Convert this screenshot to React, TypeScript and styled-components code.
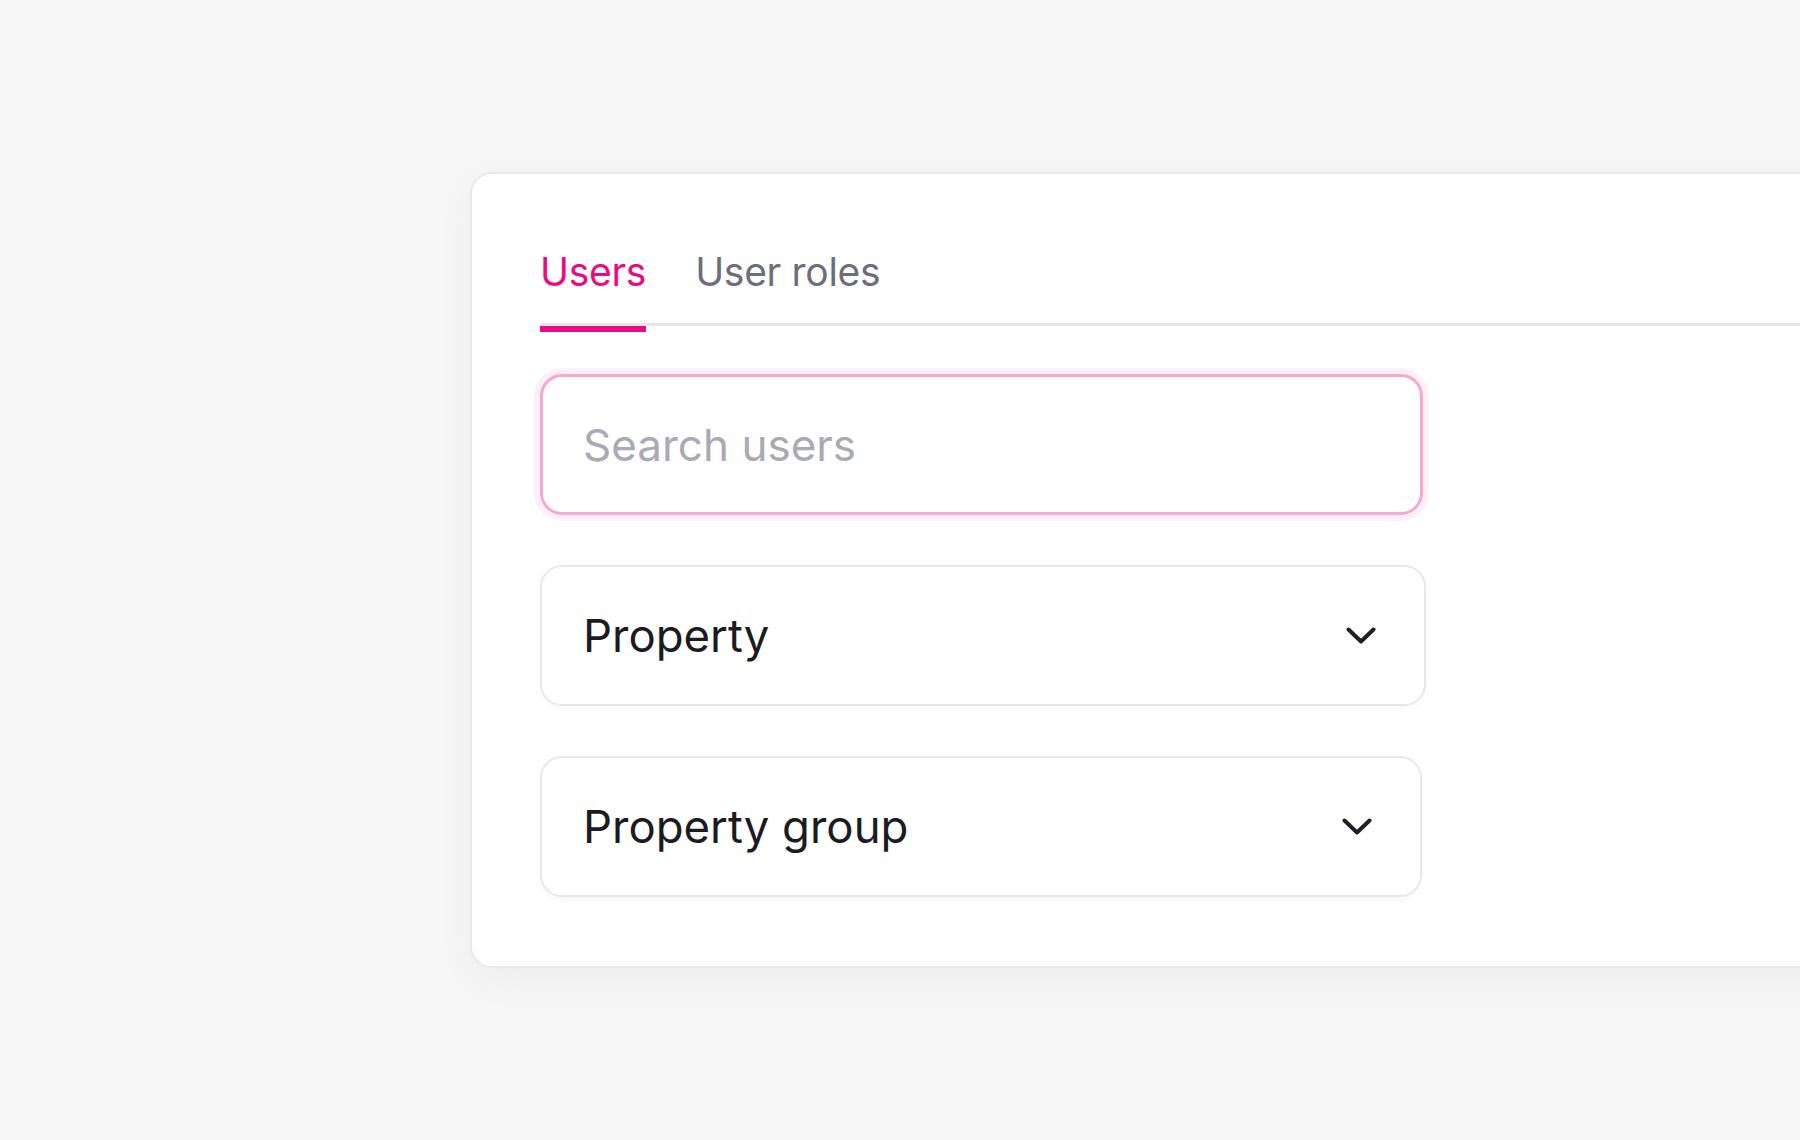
import { useState } from "react";
import styled, { createGlobalStyle } from "styled-components";

const GlobalStyle = createGlobalStyle`
  html, body {
    margin: 0;
    padding: 0;
    background: #f6f6f6;
    overflow: hidden;
  }
  body {
    font-family: Inter, "Noto Sans", "Liberation Sans", sans-serif;
    -webkit-font-smoothing: antialiased;
  }
`;

const Page = styled.div`
  width: 1800px;
  height: 1140px;
  padding: 172px 0 0 470px;
  box-sizing: border-box;
  display: flex;
  align-items: flex-start;
`;

const Card = styled.div`
  flex-shrink: 0;
  width: 1500px;
  box-sizing: border-box;
  background: #ffffff;
  border: 2px solid #e9e9e9;
  border-radius: 22px;
  box-shadow: 0 12px 40px rgba(0, 0, 0, 0.04);
  padding: 77px 68px 69px;
`;

const TabList = styled.div`
  display: flex;
  gap: 49px;
  border-bottom: 3px solid #e8e8eb;
  margin-bottom: 48px;
`;

const Tab = styled.button<{ $active?: boolean }>`
  position: relative;
  background: none;
  border: none;
  padding: 0 0 30px;
  margin: 0;
  font-family: inherit;
  font-size: 39px;
  line-height: 42px;
  letter-spacing: -0.3px;
  font-weight: 400;
  color: ${(p) => (p.$active ? "#ea0a84" : "#6c6e7a")};
  cursor: pointer;

  &::after {
    content: "";
    display: ${(p) => (p.$active ? "block" : "none")};
    position: absolute;
    left: 0;
    right: 0;
    bottom: -9px;
    height: 6px;
    background: #ea0a84;
  }
`;

const Fields = styled.div`
  display: flex;
  flex-direction: column;
  gap: 50px;
  width: 886px;
`;

const SearchInput = styled.input`
  width: 883px;
  height: 141px;
  box-sizing: border-box;
  border: 3px solid #f7a8d2;
  border-radius: 22px;
  box-shadow: 0 0 0 6px #fff0f7;
  padding: 0 40px;
  font-family: inherit;
  font-size: 44px;
  color: #1e1f24;
  outline: none;

  &::placeholder {
    color: #a9aab4;
  }
`;

const Select = styled.button<{ $width: number }>`
  width: ${(p) => p.$width}px;
  height: 141px;
  box-sizing: border-box;
  display: flex;
  align-items: center;
  justify-content: space-between;
  background: #ffffff;
  border: 2.5px solid #e8e8e8;
  border-radius: 22px;
  box-shadow: 0 3px 6px rgba(0, 0, 0, 0.03);
  padding: 0 48px 0 41px;
  font-family: inherit;
  font-size: 45.5px;
  color: #1b1c21;
  cursor: pointer;
  text-align: left;
`;

const Chevron = () => (
  <svg width="30" height="18" viewBox="0 0 30 18" fill="none">
    <polyline
      points="2.5,2.5 15,14.5 27.5,2.5"
      stroke="#1f2027"
      strokeWidth="4"
      strokeLinecap="round"
      strokeLinejoin="round"
    />
  </svg>
);

export default function App() {
  const [tab, setTab] = useState("users");
  const [query, setQuery] = useState("");

  return (
    <>
      <GlobalStyle />
      <Page>
        <Card>
          <TabList>
            <Tab $active={tab === "users"} onClick={() => setTab("users")}>
              Users
            </Tab>
            <Tab $active={tab === "roles"} onClick={() => setTab("roles")}>
              User roles
            </Tab>
          </TabList>
          <Fields>
            <SearchInput
              placeholder="Search users"
              value={query}
              onChange={(e) => setQuery(e.target.value)}
            />
            <Select $width={886}>
              Property
              <Chevron />
            </Select>
            <Select $width={882}>
              Property group
              <Chevron />
            </Select>
          </Fields>
        </Card>
      </Page>
    </>
  );
}
